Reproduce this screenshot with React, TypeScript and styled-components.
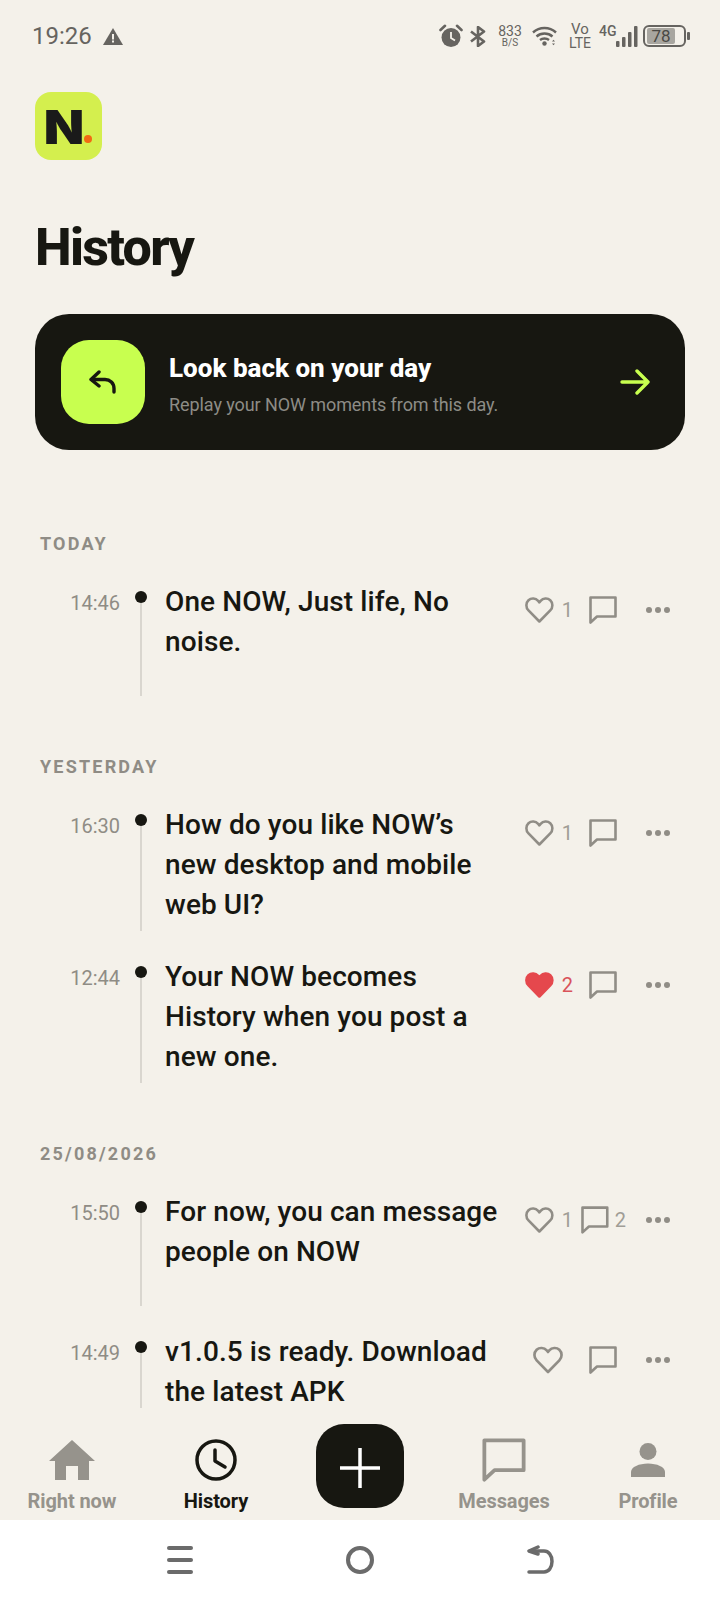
import React from 'react';
import styled, { createGlobalStyle } from 'styled-components';

const GlobalStyle = createGlobalStyle`
	html, body {
		margin: 0;
		padding: 0;
		background: #f4f1ea;
	}
	* {
		box-sizing: border-box;
	}
`;

const Page = styled.div`
	width: 720px;
	height: 1600px;
	display: flex;
	flex-direction: column;
	overflow: hidden;
	background: #f4f1ea;
	color: #171711;
	font-family: Roboto, 'Liberation Sans', sans-serif;
`;

const StatusBar = styled.div`
	height: 70px;
	flex: none;
	display: flex;
	align-items: center;
	justify-content: space-between;
	padding: 2px 34px 0 32px;
	color: #666460;
`;

const StatusLeft = styled.div`
	display: flex;
	align-items: center;
	gap: 11px;
`;

const StatusTime = styled.span`
	font-size: 24px;
`;

const StatusRight = styled.div`
	display: flex;
	align-items: center;
`;

const StackText = styled.div<{ $ml: number; $w: number }>`
	width: ${props => props.$w}px;
	margin-left: ${props => props.$ml}px;
	display: flex;
	flex-direction: column;
	align-items: center;
	line-height: 1;
`;

const StackTop = styled.span<{ $size: number }>`
	font-size: ${props => props.$size}px;
	line-height: ${props => props.$size - 1}px;
`;

const StackBottom = styled.span<{ $size: number }>`
	font-size: ${props => props.$size}px;
	line-height: ${props => props.$size}px;
`;

const NetworkLabel = styled.span`
	font-size: 14px;
	font-weight: 500;
	margin: -10px 0 0 8px;
	width: 18px;
`;

const Battery = styled.div`
	margin-left: 5px;
	width: 43px;
	height: 22px;
	border: 2px solid #666460;
	border-radius: 6px;
	padding: 1px 2px;
	display: flex;
	position: relative;
	&::after {
		content: '';
		position: absolute;
		right: -6px;
		top: 5px;
		width: 3px;
		height: 8px;
		border-radius: 1px;
		background: #666460;
	}
`;

const BatteryFill = styled.div`
	width: 28px;
	background: #a8a6a0;
	border-radius: 2px;
	display: flex;
	font-size: 17px;
	line-height: 16px;
	justify-content: center;
	color: #4a4945;
	white-space: nowrap;
`;

const Scroll = styled.main`
	flex: 1;
	min-height: 0;
	overflow: hidden;
	padding: 22px 35px 0;
`;

const Logo = styled.div`
	width: 67px;
	height: 68px;
	border-radius: 16px;
	background: #d4ef4e;
	display: flex;
	align-items: center;
	justify-content: center;
	font-family: Inter, Roboto, sans-serif;
	font-weight: 900;
	font-size: 47px;
	line-height: 1;
	color: #1a1a1a;
	padding-left: 1px;
`;

const LogoLetter = styled.span`
	display: inline-block;
	transform: scaleX(1.12);
`;

const LogoDot = styled.span`
	width: 8px;
	height: 8px;
	border-radius: 50%;
	background: #f26a12;
	align-self: flex-end;
	margin: 0 0 17px 2px;
`;

const Title = styled.h1`
	margin: 56px 0 0;
	font-size: 52px;
	line-height: 64px;
	font-weight: 800;
	letter-spacing: -1.7px;
`;

const BackCard = styled.div`
	margin: 34px 0 0;
	height: 136px;
	border-radius: 34px;
	background: #171711;
	display: flex;
	align-items: center;
	padding: 0 35px 0 26px;
`;

const BackIcon = styled.div`
	width: 84px;
	height: 84px;
	border-radius: 28px;
	background: #c8ff4f;
	display: flex;
	align-items: center;
	justify-content: center;
	flex: none;
`;

const BackText = styled.div`
	flex: 1;
	margin-left: 24px;
	padding-top: 4px;
`;

const BackTitle = styled.div`
	font-size: 26px;
	line-height: 34px;
	font-weight: 800;
	color: #fff;
`;

const BackSub = styled.div`
	margin-top: 8px;
	font-size: 18px;
	line-height: 24px;
	letter-spacing: -0.08px;
	color: #8d8c86;
`;

const Section = styled.section`
	margin-top: 59px;
	padding-left: 5px;
	&:first-of-type {
		margin-top: 82px;
	}
`;

const SectionLabel = styled.div`
	font-size: 18px;
	line-height: 24px;
	font-weight: 700;
	letter-spacing: 2.2px;
	color: #8f8c85;
	margin-bottom: 26px;
`;

const Row = styled.div`
	display: flex;
	min-height: 114px;
	padding-bottom: 6px;
	margin-bottom: 26px;
`;

const Time = styled.div`
	width: 80px;
	flex: none;
	text-align: right;
	font-size: 20px;
	line-height: 42px;
	color: #8f8c85;
`;

const Rail = styled.div`
	width: 12px;
	flex: none;
	margin: 0 18px -6px 15px;
	padding-top: 9px;
	display: flex;
	flex-direction: column;
	align-items: center;
`;

const RailDot = styled.div`
	width: 12px;
	height: 12px;
	border-radius: 50%;
	background: #171711;
	flex: none;
`;

const RailLine = styled.div`
	width: 2px;
	flex: 1;
	background: #d9d6cf;
`;

const PostText = styled.div`
	width: 340px;
	flex: none;
	font-size: 28px;
	line-height: 40px;
	font-weight: 500;
	letter-spacing: 0.1px;
`;

const Actions = styled.div`
	width: 155px;
	flex: none;
	margin-left: 20px;
	height: 44px;
	margin-top: 6px;
	display: flex;
	justify-content: flex-end;
	gap: 9px;
`;

const ActionButton = styled.div<{ $min: number; $center?: boolean; $liked?: boolean }>`
	min-width: ${props => props.$min}px;
	display: flex;
	align-items: center;
	justify-content: ${props => (props.$center ? 'center' : 'flex-start')};
	gap: ${props => (props.$center ? 6 : 8)}px;
	font-size: 20px;
	color: ${props => (props.$liked ? '#d9535a' : '#a09d96')};
`;

const MoreButton = styled(ActionButton)`
	margin-left: 2px;
`;

const ActionCount = styled.span`
	margin-right: -1px;
`;

const BottomNav = styled.nav`
	height: 112px;
	flex: none;
	display: grid;
	grid-template-columns: repeat(5, 144px);
	background: #f4f1ea;
`;

const NavItem = styled.div<{ $active?: boolean }>`
	display: flex;
	flex-direction: column;
	align-items: center;
	padding-top: 30px;
	color: ${props => (props.$active ? '#171711' : '#96938c')};
`;

const NavIcon = styled.div`
	height: 44px;
	display: flex;
	align-items: center;
	justify-content: center;
`;

const NavLabel = styled.span`
	font-size: 20px;
	line-height: 26px;
	font-weight: 700;
	letter-spacing: -0.1px;
	margin-top: 6px;
`;

const PlusSlot = styled.div`
	display: flex;
	justify-content: center;
	padding-top: 16px;
`;

const PlusButton = styled.div`
	width: 88px;
	height: 84px;
	border-radius: 28px;
	background: #171711;
	display: flex;
	align-items: center;
	justify-content: center;
	padding-top: 4px;
`;

const SystemNav = styled.div`
	height: 80px;
	flex: none;
	background: #fff;
	display: grid;
	grid-template-columns: repeat(3, 180px);
	justify-content: center;
	align-items: center;
	justify-items: center;
`;

function Heart(props: { filled?: boolean }) {
	return (
		<svg width="30" height="28" viewBox="0 0 28 26" fill={props.filled ? '#e5484d' : 'none'}>
			<path
				d="M14 24.2 3.4 13.4C.6 10.5.7 6.1 3.4 3.5c2.7-2.500 6.900-2.200 9.400.6L14 5.500l1.200-1.400c2.500-2.800 6.700-3.100 9.400-.6 2.700 2.600 2.800 7 0 9.900Z"
				stroke={props.filled ? '#e5484d' : '#908d86'}
				strokeWidth="2.500"
				strokeLinejoin="round"
			/>
		</svg>
	);
}

function Bubble(props: { size?: number; color?: string; stroke?: number }) {
	const size = props.size || 28;
	return (
		<svg width={size} height={size} viewBox="0 0 28 28" fill="none">
			<path
				d="M1.500 1.500h25v19H8l-6.500 6Z"
				stroke={props.color || '#908d86'}
				strokeWidth={props.stroke || 2.600}
				strokeLinejoin="round"
			/>
		</svg>
	);
}

function Dots() {
	return (
		<svg width="26" height="8" viewBox="0 0 26 8" fill="#908d86">
			<circle cx="4" cy="4" r="3" />
			<circle cx="13" cy="4" r="3" />
			<circle cx="22" cy="4" r="3" />
		</svg>
	);
}

type Post = {
	time: string;
	text: string;
	likes?: number;
	liked?: boolean;
	comments?: number;
};

const sections: { label: string; posts: Post[] }[] = [
	{
		label: 'TODAY',
		posts: [{ time: '14:46', text: 'One NOW, Just life, No noise.', likes: 1 }],
	},
	{
		label: 'YESTERDAY',
		posts: [
			{ time: '16:30', text: 'How do you like NOW’s new desktop and mobile web UI?', likes: 1 },
			{ time: '12:44', text: 'Your NOW becomes History when you post a new one.', likes: 2, liked: true },
		],
	},
	{
		label: '25/08/2026',
		posts: [
			{ time: '15:50', text: 'For now, you can message people on NOW', likes: 1, comments: 2 },
			{ time: '14:49', text: 'v1.0.5 is ready. Download the latest APK' },
		],
	},
];

function PostRow({ post }: { post: Post }) {
	return (
		<Row>
			<Time>{post.time}</Time>
			<Rail>
				<RailDot />
				<RailLine />
			</Rail>
			<PostText>{post.text}</PostText>
			<Actions>
				<ActionButton $min={39} $liked={post.liked}>
					<Heart filled={post.liked} />
					{post.likes && <ActionCount>{post.likes}</ActionCount>}
				</ActionButton>
				<ActionButton $min={44} $center>
					<Bubble />
					{post.comments && <ActionCount>{post.comments}</ActionCount>}
				</ActionButton>
				<MoreButton $min={44} $center>
					<Dots />
				</MoreButton>
			</Actions>
		</Row>
	);
}

export default function App() {
	return (
		<Page>
			<GlobalStyle />
			<StatusBar>
				<StatusLeft>
					<StatusTime>19:26</StatusTime>
					<svg width="20" height="17" viewBox="0 0 20 17">
						<path d="M10 0 20 17H0Z" fill="#666460" />
						<rect x="9" y="6" width="2" height="5.500" fill="#f4f1ea" />
						<rect x="9" y="12.500" width="2" height="2" fill="#f4f1ea" />
					</svg>
				</StatusLeft>
				<StatusRight>
					<svg width="24" height="24" viewBox="0 0 24 24">
						<circle cx="12" cy="13.500" r="9.500" fill="#666460" />
						<path d="M1.500 6 6 1.800M22.500 6 18 1.800" stroke="#666460" strokeWidth="2.600" strokeLinecap="round" />
						<path d="M12 8v6l4 2.500" stroke="#f4f1ea" strokeWidth="1.800" fill="none" />
					</svg>
					<svg style={{ marginLeft: 6 }} width="18" height="21" viewBox="0 0 18 21" fill="none">
						<path d="M2 5.500 15 15.500 9 20V1l6 4.500L2 15.500" stroke="#666460" strokeWidth="2.600" strokeLinejoin="round" />
					</svg>
					<StackText $ml={10} $w={26}>
						<StackTop $size={14}>833</StackTop>
						<StackBottom $size={10}>B/S</StackBottom>
					</StackText>
					<svg style={{ marginLeft: 9 }} width="25" height="20" viewBox="0 0 25 20" fill="none">
						<path d="M1 6.500c6.500-6 16.500-6 23 0M4.500 10.500c4.500-4 11.500-4 16 0M8 14c2.500-2 6.500-2 9 0" stroke="#666460" strokeWidth="2.400" />
						<circle cx="12.500" cy="17.500" r="2.200" fill="#666460" />
						<path d="M20 15.500h3l-1.500-1.800ZM20 17.500h3l-1.500 1.800Z" fill="#666460" />
					</svg>
					<StackText $ml={12} $w={22}>
						<StackTop $size={15}>Vo</StackTop>
						<StackBottom $size={14}>LTE</StackBottom>
					</StackText>
					<NetworkLabel>4G</NetworkLabel>
					<svg style={{ marginLeft: -1 }} width="22" height="21" viewBox="0 0 22 21" fill="#666460">
						<rect x="0" y="15" width="3.500" height="6" rx="1" />
						<rect x="6" y="11" width="3.500" height="10" rx="1" />
						<rect x="12" y="6" width="3.500" height="15" rx="1" />
						<rect x="18" y="0" width="3.500" height="21" rx="1" />
					</svg>
					<Battery>
						<BatteryFill>78</BatteryFill>
					</Battery>
				</StatusRight>
			</StatusBar>
			<Scroll>
				<Logo>
					<LogoLetter>N</LogoLetter>
					<LogoDot />
				</Logo>
				<Title>History</Title>
				<BackCard>
					<BackIcon>
						<svg width="28" height="24" viewBox="0 0 28 24" fill="none" stroke="#171711" strokeWidth="3.400" strokeLinecap="round" strokeLinejoin="round">
							<path d="M10 2 2 9.500l8 6.500" />
							<path d="M2.500 9.500H16c5 0 9 3.500 9 9V22" />
						</svg>
					</BackIcon>
					<BackText>
						<BackTitle>Look back on your day</BackTitle>
						<BackSub>Replay your NOW moments from this day.</BackSub>
					</BackText>
					<svg width="30" height="26" viewBox="0 0 30 26" fill="none" stroke="#c8ff4f" strokeWidth="3.400" strokeLinecap="round" strokeLinejoin="round">
						<path d="M2 13h26M17 2l11 11-11 11" />
					</svg>
				</BackCard>
				{sections.map(section => (
					<Section key={section.label}>
						<SectionLabel>{section.label}</SectionLabel>
						{section.posts.map(post => (
							<PostRow key={post.time} post={post} />
						))}
					</Section>
				))}
			</Scroll>
			<BottomNav>
				<NavItem>
					<NavIcon>
						<svg width="46" height="40" viewBox="0 0 46 40" fill="#96938c">
							<path d="M23 0 46 21H40V40H29V26H17V40H6V21H0Z" />
						</svg>
					</NavIcon>
					<NavLabel>Right now</NavLabel>
				</NavItem>
				<NavItem $active>
					<NavIcon>
						<svg width="42" height="42" viewBox="0 0 42 42" fill="none" stroke="#171711" strokeWidth="3.500">
							<circle cx="21" cy="21" r="19" />
							<path d="M20 11v11l10 6" strokeLinecap="round" strokeLinejoin="round" />
						</svg>
					</NavIcon>
					<NavLabel>History</NavLabel>
				</NavItem>
				<PlusSlot>
					<PlusButton>
						<svg width="40" height="40" viewBox="0 0 40 40" stroke="#fff" strokeWidth="3.500">
							<path d="M20 0v40M0 20h40" />
						</svg>
					</PlusButton>
				</PlusSlot>
				<NavItem>
					<NavIcon>
						<Bubble size={44} color="#96938c" stroke={2.400} />
					</NavIcon>
					<NavLabel>Messages</NavLabel>
				</NavItem>
				<NavItem>
					<NavIcon>
						<svg width="34" height="34" viewBox="0 0 34 34" fill="#96938c">
							<circle cx="17" cy="8.500" r="8.500" />
							<path d="M0 34v-5c0-5 8-8.500 17-8.500S34 24 34 29v5Z" />
						</svg>
					</NavIcon>
					<NavLabel>Profile</NavLabel>
				</NavItem>
			</BottomNav>
			<SystemNav>
				<svg width="26" height="30" viewBox="0 0 26 30" fill="#6b6b6b">
					<rect y="1" width="26" height="4" rx="2" />
					<rect y="13" width="26" height="4" rx="2" />
					<rect y="25" width="26" height="4" rx="2" />
				</svg>
				<svg width="28" height="28" viewBox="0 0 28 28" fill="none" stroke="#6b6b6b" strokeWidth="4">
					<circle cx="14" cy="14" r="12" />
				</svg>
				<svg width="28" height="30" viewBox="0 0 28 30" fill="none" stroke="#6b6b6b" strokeWidth="3.500" strokeLinecap="round" strokeLinejoin="round">
					<path d="M12 2 3 6l9 3" />
					<path d="M4 6h14c4.500 0 8 4 8 10.500S22.500 27 18 27H3" />
				</svg>
			</SystemNav>
		</Page>
	);
}
